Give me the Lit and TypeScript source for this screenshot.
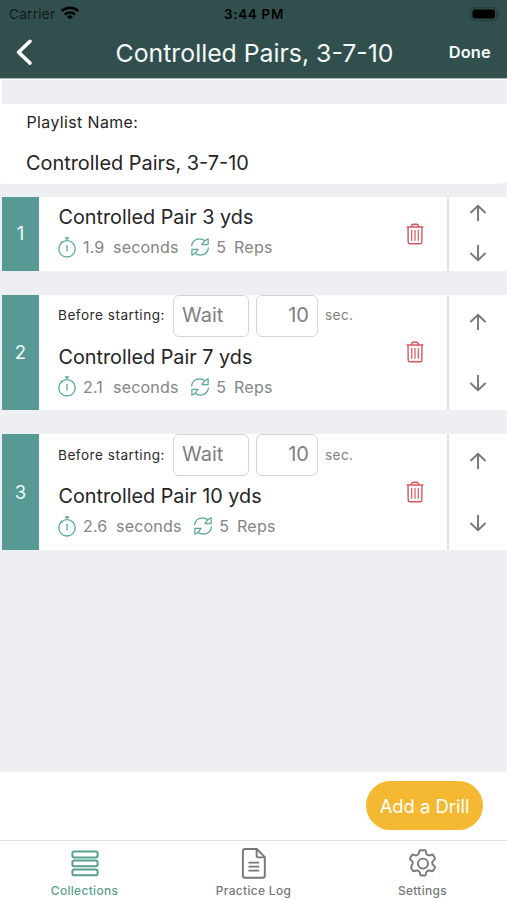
import { LitElement, html, css, svg, nothing } from "lit";
import { customElement, property } from "lit/decorators.js";

const icons = {
  wifi: svg`<svg width="20" height="14" viewBox="0 0 20 14" fill="none" stroke="#000" stroke-width="2.5"><path d="M1.6 5.1a12 12 0 0 1 16.8 0M4.9 8.5a7.3 7.3 0 0 1 10.2 0"/><path d="M10 13.6 7.1 10.7a4.1 4.1 0 0 1 5.8 0Z" fill="#000" stroke="none"/></svg>`,
  battery: svg`<svg width="31" height="14" viewBox="0 0 31 14"><rect x=".6" y=".6" width="26.4" height="12.8" rx="4" fill="none" stroke="#213f3c" stroke-width="1.2"/><rect x="2.5" y="2.4" width="22.5" height="9.2" rx="2" fill="#000"/><path d="M28.3 4.5q2.2 2.5 0 5z" fill="#213f3c"/></svg>`,
  back: svg`<svg width="18" height="28" viewBox="0 0 18 28" fill="none" stroke="#fff" stroke-width="3.6" stroke-linecap="round" stroke-linejoin="round"><path d="M15 3.3 3.6 14.2 15 25.1"/></svg>`,
  timer: svg`<svg width="18" height="21" viewBox="0 0 18 21" fill="none" stroke="#58a996" stroke-width="1.3"><circle cx="9" cy="11.8" r="8.2"/><path d="M9 8v6.5M9 1v2.6M7 1h4M2.8 4.8l1.4 1.4"/></svg>`,
  repeat: svg`<svg width="20" height="20" viewBox="0 0 20 20" fill="none" stroke="#58a996" stroke-width="1.25" stroke-linejoin="round"><path d="M1.5 9.3C1.7 4.8 5.2 1.8 9.6 1.8c2.2 0 3.8.7 5.2 1.9l3.3-2v5.9h-6.2l2.9-3.9M18.5 10.5c-.2 4.5-3.7 7.6-8.1 7.6-2.2 0-3.8-.7-5.2-1.9l-3.3 2v-5.9h6.2l-2.9 3.9"/></svg>`,
  trash: svg`<svg width="18" height="22" viewBox="0 0 18 22" fill="none" stroke="#d9565e" stroke-width="1.4" stroke-linejoin="round"><path d="M.7 4h16.6M2 4l.2 15.2q.1 1.6 1.6 1.6h10.4q1.5 0 1.6-1.6L16 4M5.4 4q0-2.8 2-2.8h3.2q2 0 2 2.8"/><path d="M5.7 7v10.8M9 7v10.8M12.3 7v10.8" stroke-width="1.2"/></svg>`,
  up: svg`<svg width="18" height="18" viewBox="0 0 18 18" fill="none" stroke="#777" stroke-width="1.9"><path d="M9 17V2M1.4 9 9 1.8 16.6 9"/></svg>`,
  down: svg`<svg width="18" height="18" viewBox="0 0 18 18" fill="none" stroke="#777" stroke-width="1.9"><path d="M9 1v15M1.4 9 9 16.2 16.6 9"/></svg>`,
  stack: svg`<svg width="28" height="30" viewBox="0 0 28 30" fill="none" stroke="#58a090" stroke-width="2"><rect x="1.4" y="3.6" width="25.2" height="5.8" rx="1.8"/><rect x="1.4" y="12.5" width="25.2" height="5.8" rx="1.8"/><rect x="1.4" y="21.4" width="25.2" height="5.8" rx="1.8"/></svg>`,
  page: svg`<svg width="26" height="32" viewBox="0 0 26 32" fill="none" stroke="#777" stroke-width="1.9" stroke-linejoin="round"><path d="M4.2 2h11.6l8 8.2v18.3q0 2.3-2.3 2.3H4.2q-2.3 0-2.3-2.3V4.3Q1.9 2 4.2 2Z"/><path d="M15.6 2.3v6.3q0 1.8 1.8 1.8h6.2"/><path d="M7.4 15.6h10.8M7.4 19.6h10.8M7.4 23.6h10.8" stroke-width="1.6"/></svg>`,
  gear: svg`<svg width="30" height="30" viewBox="0 0 30 30" fill="none" stroke="#777" stroke-width="1.9" stroke-linejoin="round"><circle cx="15" cy="15.6" r="5"/><path d="M13.4 2.3h3.2q1.1 0 1.3 1.1l.4 2q.2.8.9 1.2l1 .6q.7.4 1.5.1l1.9-.7q1-.4 1.6.6l1.6 2.7q.5 1-.3 1.7l-1.5 1.3q-.7.6-.7 1.3v1.4q0 .7.7 1.3l1.5 1.3q.8.7.3 1.7l-1.6 2.7q-.6 1-1.6.6l-1.9-.7q-.8-.3-1.5.1l-1 .6q-.7.4-.9 1.2l-.4 2q-.2 1.1-1.3 1.1h-3.2q-1.1 0-1.3-1.1l-.4-2q-.2-.8-.9-1.2l-1-.6q-.7-.4-1.5-.1l-1.9.7q-1 .4-1.6-.6l-1.6-2.7q-.5-1 .3-1.7L4 16.9q.7-.6.7-1.3v-1.4q0-.7-.7-1.3l-1.5-1.2q-.8-.7-.3-1.7l1.6-2.7q.6-1 1.600-.6l1.9.7q.8.3 1.5-.1l1-.6q.7-.4.9-1.2l.4-2q.2-1.200 1.3-1.200Z"/></svg>`,
};

interface Drill {
  name: string;
  seconds: string;
  reps: number;
  wait?: number;
}

@customElement("drill-row")
export class DrillRow extends LitElement {
  @property({ attribute: false }) drill!: Drill;
  @property({ type: Number }) index = 1;

  static styles = css`
    :host { display: block; }
    svg { display: block; flex: none; }
    .row { display: flex; height: 115.5px; padding-left: 2px; white-space: nowrap; }
    .row.short { height: 73.5px; }
    .number { box-sizing: border-box; width: 37px; padding-bottom: 1px; background: #579995; color: #f0fbfa; display: grid; place-items: center; font-size: 18.5px; }
    .body { flex: 1; display: flex; align-items: center; background: #fff; padding: 0 23px 0 19px; }
    .info { flex: 1; align-self: stretch; }
    .before { display: flex; align-items: center; height: 42px; }
    .label { width: 115px; font-size: 13.6px; letter-spacing: 0.5px; color: #2b2b2b; line-height: 16px; padding-bottom: 1px; }
    .field { box-sizing: border-box; height: 42px; border: 1.5px solid #d4d4d4; border-radius: 6px; font-size: 20px; line-height: 39px; color: #808080; padding: 0 8px; }
    .mode { width: 76px; margin-right: 7px; }
    .amount { width: 62px; text-align: right; padding-right: 8px; }
    .unit { margin-left: 7px; font-size: 13.6px; letter-spacing: 0.4px; color: #808080; line-height: 16px; padding-bottom: 1px; }
    .name { height: 40px; line-height: 40px; font-size: 19.8px; padding-left: 0.5px; color: #252525; }
    .meta { display: flex; align-items: center; height: 20px; font-size: 16.1px; letter-spacing: 0.15px; color: #858585; }
    .meta .value { margin-left: 7px; }
    .meta .time { width: 22px; }
    .meta .time.wide { width: 25px; }
    .meta .word { margin-left: 8px; }
    .meta .reps { margin-left: 11.5px; }
    .meta .count { margin-left: 6px; }
    .order { box-sizing: border-box; width: 60px; background: #fff; border-left: 2px solid #dfe1e2; display: flex; flex-direction: column; align-items: center; justify-content: space-between; padding: 18px 0; }
    .short .order { padding: 7px 0 8.5px; }
  `;

  render() {
    const { name, seconds, reps, wait } = this.drill;
    return html`
      <div class="row ${wait === undefined ? "short" : ""}">
        <div class="number">${this.index}</div>
        <div class="body">
          <div class="info">
            ${wait === undefined
              ? nothing
              : html`<div class="before">
                  <span class="label">Before starting:</span>
                  <span class="field mode">Wait</span>
                  <span class="field amount">${wait}</span>
                  <span class="unit">sec.</span>
                </div>`}
            <div class="name">${name}</div>
            <div class="meta">
              ${icons.timer}<span class="value time ${seconds.includes("1") ? "" : "wide"}">${seconds}</span><span class="word">seconds</span>
              <span class="reps">${icons.repeat}</span><span class="value count">${reps}</span><span class="word">Reps</span>
            </div>
          </div>
          ${icons.trash}
        </div>
        <div class="order">${icons.up}${icons.down}</div>
      </div>
    `;
  }
}

@customElement("app-root")
export class AppRoot extends LitElement {
  static styles = css`
    :host { display: block; font-family: Inter, "Liberation Sans", sans-serif; color: #252525; }
    svg { display: block; }
    .screen { width: 507px; height: 900px; display: flex; flex-direction: column; background: #eeeff3; overflow: hidden; white-space: nowrap; }
    .top { height: 79px; background: #31504d; border-bottom: 1px solid #a4bab6; box-sizing: border-box; flex: none; }
    .status { height: 27px; display: grid; grid-template-columns: 1fr auto 1fr; align-items: center; padding: 0 6px 0 9px; color: #000; font-size: 13.5px; }
    .carrier { display: flex; align-items: center; gap: 5px; letter-spacing: 0.3px; color: #101a19; }
    .carrier svg { margin-bottom: 2px; }
    .clock { font-weight: 600; font-size: 13.4px; letter-spacing: 0.7px; padding-left: 0; margin-left: -2px; }
    .battery { justify-self: end; }
    .nav { height: 51px; display: grid; grid-template-columns: 1fr auto 1fr; align-items: center; padding: 0 16px 0 18px; color: #f5fafa; }
    .back { margin-left: -3px; padding-bottom: 1px; }
    .title { font-size: 24.8px; }
    .done { justify-self: end; font-size: 16.4px; font-weight: 600; letter-spacing: 0.2px; padding-bottom: 1px; }
    .gap { height: 25px; flex: none; border-left: 2px solid #fff; border-top: 1px solid #fff; box-sizing: border-box; }
    .playlist { height: 80px; margin-bottom: 0.5px; flex: none; background: #fff; padding: 0 26px; box-sizing: border-box; border-radius: 0 0 22px 12px / 0 0 2px 1px; }
    .caption { height: 38px; line-height: 38px; font-size: 15.9px; letter-spacing: 0.4px; padding-left: 0.5px; }
    .value { height: 42px; line-height: 42px; font-size: 19.9px; }
    .drills { flex: 1; display: flex; flex-direction: column; gap: 24.2px; padding-top: 12.5px; }
    .actions { height: 68px; flex: none; background: #fff; display: flex; justify-content: flex-end; align-items: center; padding-right: 24px; }
    .add { width: 117px; height: 49px; border-radius: 25px; background: #f4b832; color: #fff; display: grid; place-items: center; font-size: 18.4px; }
    .tabs { height: 60.5px; flex: none; box-sizing: border-box; border-top: 1.5px solid #dedede; background: #fff; display: grid; grid-template-columns: repeat(3, 1fr); }
    .tab { display: flex; flex-direction: column; align-items: center; color: #777; font-size: 11.9px; font-weight: 500; letter-spacing: 0.35px; }
    .tab.active { color: #58a090; }
    .glyph { box-sizing: border-box; height: 43px; padding-top: 1px; display: grid; place-items: center; }
    .text { line-height: 14px; }
  `;

  private drills: Drill[] = [
    { name: "Controlled Pair 3 yds", seconds: "1.9", reps: 5 },
    { name: "Controlled Pair 7 yds", seconds: "2.1", reps: 5, wait: 10 },
    { name: "Controlled Pair 10 yds", seconds: "2.6", reps: 5, wait: 10 },
  ];

  render() {
    return html`
      <div class="screen">
        <header class="top">
          <div class="status">
            <span class="carrier">Carrier ${icons.wifi}</span>
            <span class="clock">3:44 PM</span>
            <span class="battery">${icons.battery}</span>
          </div>
          <div class="nav">
            <span class="back">${icons.back}</span>
            <span class="title">Controlled Pairs, 3-7-10</span>
            <span class="done">Done</span>
          </div>
        </header>
        <div class="gap"></div>
        <section class="playlist">
          <div class="caption">Playlist Name:</div>
          <div class="value">Controlled Pairs, 3-7-10</div>
        </section>
        <main class="drills">
          ${this.drills.map((d, i) => html`<drill-row .drill=${d} .index=${i + 1}></drill-row>`)}
        </main>
        <div class="actions"><div class="add">Add a Drill</div></div>
        <nav class="tabs">
          <div class="tab active"><span class="glyph">${icons.stack}</span><span class="text">Collections</span></div>
          <div class="tab"><span class="glyph">${icons.page}</span><span class="text">Practice Log</span></div>
          <div class="tab"><span class="glyph">${icons.gear}</span><span class="text">Settings</span></div>
        </nav>
      </div>
    `;
  }
}
